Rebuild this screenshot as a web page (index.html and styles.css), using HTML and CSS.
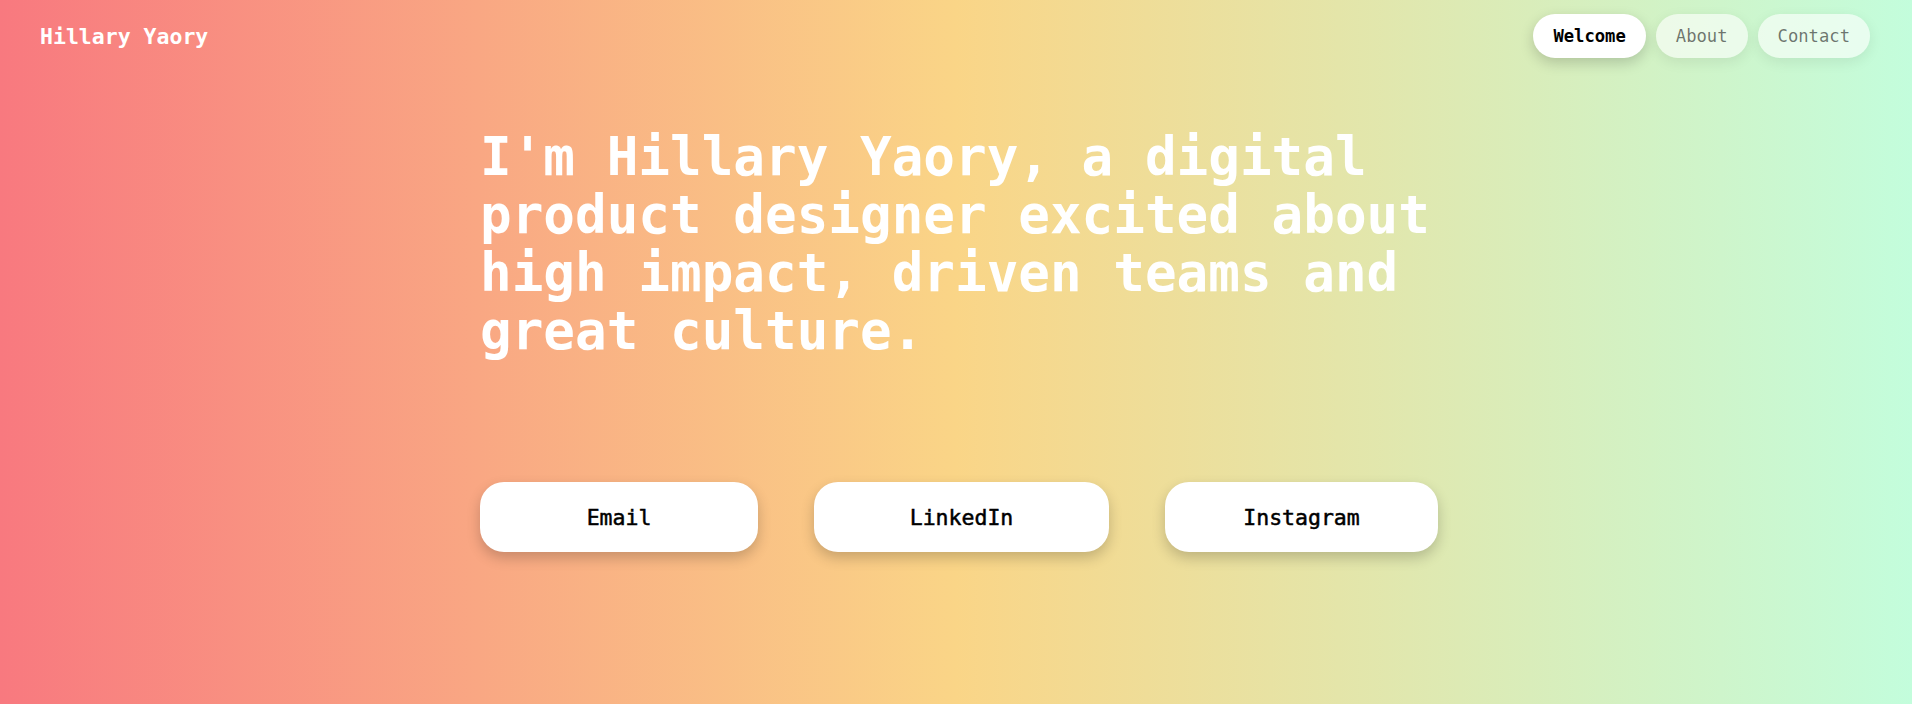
FILE: index.html
```html
<!DOCTYPE html>
<html lang="en">
<head>
<meta charset="utf-8">
<title>Hillary Yaory</title>
<link rel="stylesheet" href="styles.css">
</head>
<body>
<div class="page">
  <header class="header">
    <div class="logo">Hillary Yaory</div>
    <nav class="nav">
      <a class="pill pill-active" href="#">Welcome</a>
      <a class="pill" href="#">About</a>
      <a class="pill" href="#">Contact</a>
    </nav>
  </header>
  <main class="hero">
    <h1 class="headline">I'm Hillary Yaory, a digital product designer excited about high impact, driven teams and great culture.</h1>
    <div class="links">
      <a class="link-btn" href="#">Email</a>
      <a class="link-btn" href="#">LinkedIn</a>
      <a class="link-btn" href="#">Instagram</a>
    </div>
  </main>
</div>
</body>
</html>
```
FILE: styles.css
```css
* { box-sizing: border-box; }
html, body { margin: 0; padding: 0; }
body {
  font-family: "DejaVu Sans Mono", "Liberation Mono", monospace;
  width: 1912px;
  height: 704px;
  overflow: hidden;
}
.page {
  height: 704px;
  background: linear-gradient(to right, #f8797f 0%, #fad587 50%, #c3fddc 100%);
}
.header {
  display: flex;
  justify-content: space-between;
  align-items: center;
  padding: 14px 42px 0 40px;
}
.logo {
  color: #fff;
  font-weight: bold;
  font-size: 21.5px;
}
.nav {
  display: flex;
  gap: 10px;
}
.pill {
  height: 44px;
  padding: 0 20px;
  border-radius: 22px;
  display: flex;
  align-items: center;
  font-size: 17.2px;
  text-decoration: none;
  color: rgba(0, 0, 0, 0.55);
  background: rgba(255, 255, 255, 0.6);
  box-shadow: 0 4px 14px rgba(0, 0, 0, 0.08);
}
.pill-active {
  background: #fff;
  color: #000;
  font-weight: bold;
  box-shadow: 0 5px 14px rgba(0, 0, 0, 0.18);
}
.hero {
  width: 980px;
  margin: 0 auto;
  padding: 70px 0 0 14px;
}
.headline {
  margin: 0;
  color: #fff;
  font-size: 52.6px;
  line-height: 58px;
  font-weight: bold;
}
.links {
  display: grid;
  grid-template-columns: 278px 295px 273px;
  column-gap: 56px;
  margin-top: 122px;
}
.link-btn {
  height: 70px;
  border-radius: 24px;
  background: #fff;
  color: #000;
  display: flex;
  align-items: center;
  justify-content: center;
  font-size: 21.5px;
  -webkit-text-stroke: 0.5px #000;
  text-decoration: none;
  box-shadow: 0 6px 14px rgba(0, 0, 0, 0.2);
}
```
